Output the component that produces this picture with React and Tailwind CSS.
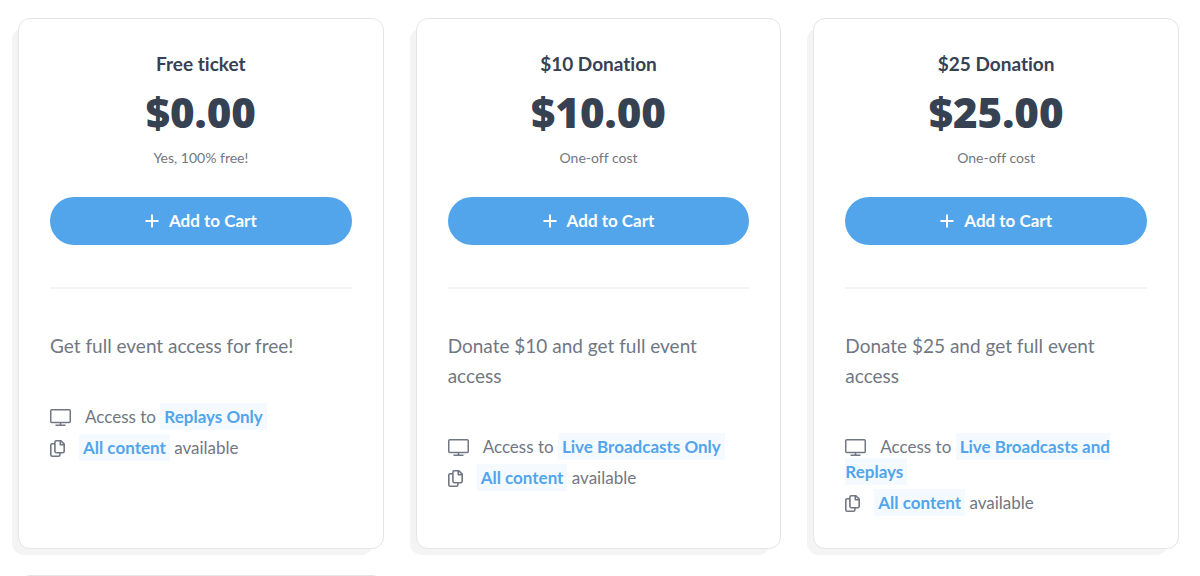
import React from 'react';

const tickets = [
  {
    name: 'Free ticket',
    price: '$0.00',
    note: 'Yes, 100% free!',
    description: 'Get full event access for free!',
    access: 'Replays Only',
  },
  {
    name: '$10 Donation',
    price: '$10.00',
    note: 'One-off cost',
    description: 'Donate $10 and get full event access',
    access: 'Live Broadcasts Only',
  },
  {
    name: '$25 Donation',
    price: '$25.00',
    note: 'One-off cost',
    description: 'Donate $25 and get full event access',
    access: 'Live Broadcasts and Replays',
  },
];

const PlusIcon = () => (
  <svg className="w-[14px] h-[14px]" viewBox="0 0 14 14" fill="none" stroke="currentColor" strokeWidth="2" strokeLinecap="round" aria-hidden="true">
    <path d="M7 1.200v11.600M1.200 7h11.600" />
  </svg>
);

const DesktopIcon = () => (
  <svg className="inline-block align-[-3px] w-[21px] h-[17px] mr-[14px]" viewBox="0 0 21 17" fill="none" stroke="currentColor" strokeWidth="1.5" aria-hidden="true">
    <rect x=".75" y=".75" width="19.5" height="12.8" rx="1" />
    <path d="M10.5 13.5V16M5.5 16.2h10" />
  </svg>
);

const CopyIcon = () => (
  <svg className="inline-block align-[-3px] w-[15px] h-[17px] mr-[14px]" viewBox="0 0 15 17" fill="none" stroke="currentColor" strokeWidth="1.6" strokeLinejoin="round" aria-hidden="true">
    <path d="M6.3.8h4.6l3.3 3.3v7.2a1.4 1.4 0 0 1-1.4 1.4H6.3a1.4 1.4 0 0 1-1.4-1.4V2.2A1.4 1.4 0 0 1 6.3.8z" />
    <path d="M10.3.8v3.9h3.9" />
    <path d="M4.9 3.8H2.2A1.4 1.4 0 0 0 .8 5.2v9.6a1.4 1.4 0 0 0 1.4 1.4h6.3a1.4 1.4 0 0 0 1.4-1.4v-2.1" />
  </svg>
);

const Highlight = ({ children }) => (
  <span className="px-1 py-[3px] font-bold text-[#52a5ea] bg-[#f4faff]">{children}</span>
);

// White card with a grey plate peeking out at the bottom left
const Card = ({ children }) => (
  <div className="relative">
    <div className="absolute top-[10px] bottom-[-6px] left-[-6px] right-[11px] rounded-xl bg-[#f4f4f4]" />
    <div className="relative h-full px-[31px] pt-[31px] pb-[33px] rounded-xl border border-[#e4e5e7] bg-white">{children}</div>
  </div>
);

const Ticket = ({ ticket }) => (
  <Card>
    <div className="text-center text-[#364152]">
      <h2 className="text-[19px] leading-7 font-bold">{ticket.name}</h2>
      <p className="mt-2 font-['Open_Sans',sans-serif] text-[42px] leading-[52px] font-extrabold">{ticket.price}</p>
      <p className="mt-[10px] text-[14px] leading-5 text-[#717782]">{ticket.note}</p>
    </div>
    <button
      type="button"
      className="mt-[29px] flex w-full h-12 items-center justify-center gap-[10px] rounded-full bg-[#52a5ea] text-[17px] font-bold text-white cursor-pointer hover:bg-[#3f97e0]"
    >
      <PlusIcon />
      Add to Cart
    </button>
    <hr className="mt-[42px] border-t-2 border-[#f4f4f4]" />
    <p className="mt-[42px] text-[19px] leading-[30px]">{ticket.description}</p>
    <ul className="mt-[43px] flex flex-col gap-[6px] text-[17px] leading-[25px]">
      <li>
        <DesktopIcon />
        Access to <Highlight>{ticket.access}</Highlight>
      </li>
      <li>
        <CopyIcon />
        <Highlight>All content</Highlight> available
      </li>
    </ul>
  </Card>
);

const App = () => (
  <main className="h-screen overflow-hidden bg-white pt-[18px] pl-[18px] pr-[21px] font-['Lato',sans-serif] [font-variant-ligatures:none] text-[#717782]">
    <div className="grid grid-cols-3 gap-x-8 gap-y-[26px]">
      {tickets.map((ticket) => (
        <Ticket key={ticket.name} ticket={ticket} />
      ))}
      {/* next row, continues below the fold */}
      <Card />
    </div>
  </main>
);

export default App;
